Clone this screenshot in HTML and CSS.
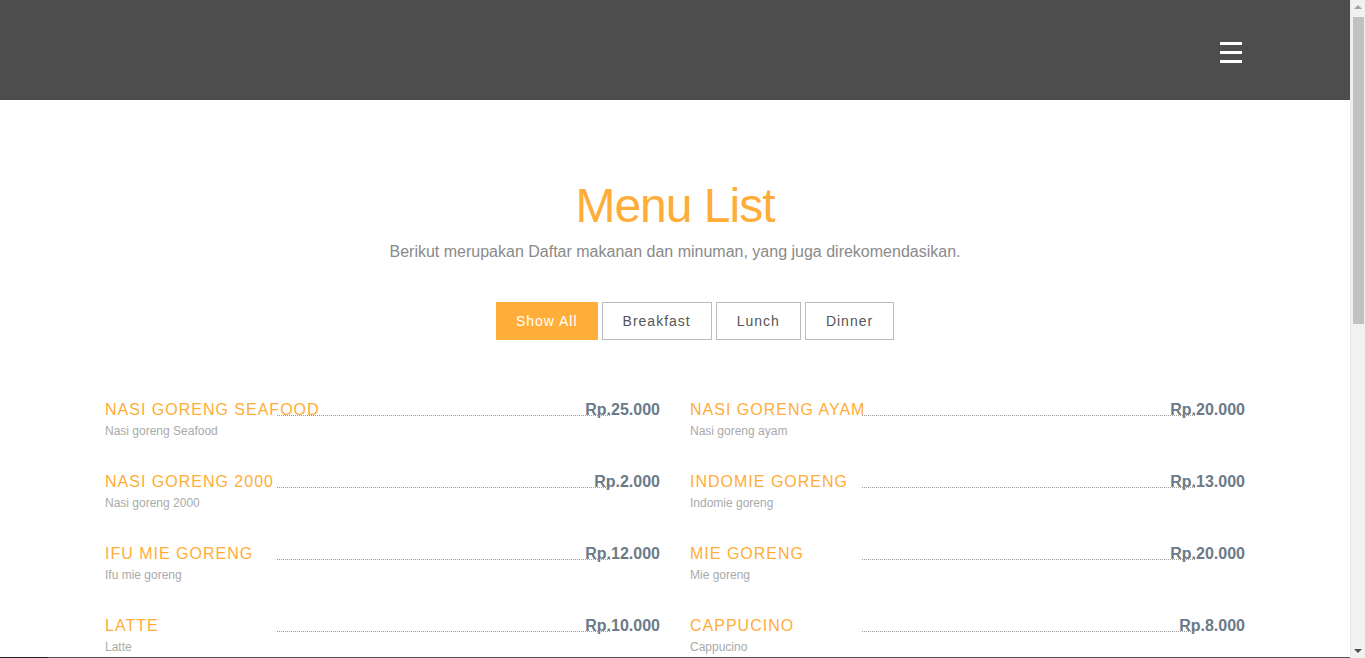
FILE: index.html
```html
<!DOCTYPE html>
<html lang="id">
<head>
<meta charset="utf-8">
<title>Menu List</title>
<link rel="stylesheet" href="styles.css">
</head>
<body>
<header class="topbar">
  <div class="container topbar-inner">
    <button class="hamburger" aria-label="Menu"><span></span><span></span><span></span></button>
  </div>
</header>

<section class="menu-section">
  <div class="container">
    <h1 class="title">Menu List</h1>
    <p class="subtitle">Berikut merupakan Daftar makanan dan minuman, yang juga direkomendasikan.</p>

    <ul class="filters">
      <li><button class="filter active">Show All</button></li>
      <li><button class="filter">Breakfast</button></li>
      <li><button class="filter">Lunch</button></li>
      <li><button class="filter">Dinner</button></li>
    </ul>

    <div class="menu-grid">
      <div class="item"><div class="item-head"><h4 class="item-name">Nasi Goreng Seafood</h4><span class="item-price">Rp.25.000</span></div><span class="dots"></span><p class="item-desc">Nasi goreng Seafood</p></div>
      <div class="item"><div class="item-head"><h4 class="item-name">Nasi Goreng Ayam</h4><span class="item-price">Rp.20.000</span></div><span class="dots"></span><p class="item-desc">Nasi goreng ayam</p></div>
      <div class="item"><div class="item-head"><h4 class="item-name">Nasi Goreng 2000</h4><span class="item-price">Rp.2.000</span></div><span class="dots"></span><p class="item-desc">Nasi goreng 2000</p></div>
      <div class="item"><div class="item-head"><h4 class="item-name">Indomie Goreng</h4><span class="item-price">Rp.13.000</span></div><span class="dots"></span><p class="item-desc">Indomie goreng</p></div>
      <div class="item"><div class="item-head"><h4 class="item-name">Ifu Mie Goreng</h4><span class="item-price">Rp.12.000</span></div><span class="dots"></span><p class="item-desc">Ifu mie goreng</p></div>
      <div class="item"><div class="item-head"><h4 class="item-name">Mie Goreng</h4><span class="item-price">Rp.20.000</span></div><span class="dots"></span><p class="item-desc">Mie goreng</p></div>
      <div class="item"><div class="item-head"><h4 class="item-name">Latte</h4><span class="item-price">Rp.10.000</span></div><span class="dots"></span><p class="item-desc">Latte</p></div>
      <div class="item"><div class="item-head"><h4 class="item-name">Cappucino</h4><span class="item-price">Rp.8.000</span></div><span class="dots"></span><p class="item-desc">Cappucino</p></div>
      <div class="item"><div class="item-head"><h4 class="item-name">Es Teh Manis</h4><span class="item-price">Rp.5.000</span></div><span class="dots"></span><p class="item-desc">Es teh manis</p></div>
      <div class="item"><div class="item-head"><h4 class="item-name">Es Jeruk</h4><span class="item-price">Rp.7.000</span></div><span class="dots"></span><p class="item-desc">Es jeruk</p></div>
    </div>
  </div>
</section>

<footer class="footer">
  <div class="container footer-inner">
    <p class="footer-text">&copy; Menu List</p>
  </div>
</footer>

<div class="bottom-line"><span class="bottom-line-dark"></span></div>

<div class="fake-scrollbar" aria-hidden="true">
  <span class="sb-arrow sb-up"></span>
  <span class="sb-thumb"></span>
  <span class="sb-arrow sb-down"></span>
</div>
</body>
</html>
```

FILE: styles.css
```css
* {
  box-sizing: border-box;
}

body {
  margin: 0 15px 0 0;
  font-family: "Liberation Sans", Arial, sans-serif;
  color: #555;
  background: #fff;
}

.container {
  width: 1140px;
  margin: 0 auto;
}

.topbar {
  height: 100px;
  background: #4d4d4d;
}

.topbar-inner {
  height: 100%;
  display: flex;
  justify-content: flex-end;
  align-items: flex-start;
  padding-top: 42px;
  padding-right: 3px;
}

.hamburger {
  width: 22px;
  padding: 0;
  border: 0;
  background: transparent;
  display: flex;
  flex-direction: column;
  gap: 6px;
  cursor: pointer;
}

.hamburger span {
  display: block;
  height: 3px;
  width: 22px;
  background: #fff;
}

.menu-section {
  padding-top: 79px;
  padding-bottom: 280px;
}

.title {
  margin: 0;
  text-align: center;
  font-size: 48px;
  line-height: 53px;
  font-weight: 400;
  letter-spacing: -1px;
  color: #ffad38;
}

.subtitle {
  margin: 9px 0 0;
  text-align: center;
  font-size: 16px;
  line-height: 22px;
  color: #8a8a8a;
}

.filters {
  list-style: none;
  margin: 39px 0 59px;
  padding: 0 0 0 40px;
  display: flex;
  justify-content: center;
  gap: 4px;
}

.filter {
  font-family: "Liberation Sans", Arial, sans-serif;
  font-size: 14px;
  line-height: 20px;
  letter-spacing: 1px;
  padding: 8px 20px;
  border: 1px solid #bbb;
  background: #fff;
  color: #555;
  cursor: pointer;
}

.filter.active {
  background: #ffae3a;
  border-color: #ffae3a;
  color: #fff;
  padding: 8px 19px;
}

.menu-grid {
  display: grid;
  grid-template-columns: 1fr 1fr;
  column-gap: 30px;
}

.item {
  position: relative;
  margin-bottom: 31px;
}

.item-head {
  display: flex;
  justify-content: space-between;
  align-items: baseline;
}

.item-name {
  margin: 0;
  font-size: 16px;
  line-height: 22px;
  font-weight: 400;
  letter-spacing: 1px;
  text-transform: uppercase;
  color: #ffad38;
}

.item-price {
  font-size: 16px;
  line-height: 22px;
  font-weight: 700;
  color: #6b7a88;
}

.dots {
  position: absolute;
  left: 172px;
  top: 16px;
  width: 333px;
  border-top: 1px dotted #999;
}

.item-desc {
  margin: 2px 0 0;
  font-size: 12px;
  line-height: 17px;
  color: #aaa;
}

.footer {
  background: #4d4d4d;
  padding: 40px 0;
}

.footer-text {
  margin: 0;
  text-align: center;
  color: #ccc;
  font-size: 14px;
}

.bottom-line {
  position: fixed;
  left: 0;
  right: 15px;
  bottom: 0;
  height: 1px;
  background: #555;
}

.bottom-line-dark {
  display: block;
  width: 48px;
  height: 1px;
  background: #222;
}

.fake-scrollbar {
  position: fixed;
  top: 0;
  right: 0;
  bottom: 0;
  width: 15px;
  background: #f1f1f1;
  border-left: 1px solid #e8e8e8;
}

.sb-thumb {
  position: absolute;
  left: 2px;
  right: 1px;
  top: 17px;
  height: 307px;
  background: #c1c1c1;
}

.sb-arrow {
  position: absolute;
  left: 3px;
  width: 0;
  height: 0;
  border-left: 4px solid transparent;
  border-right: 4px solid transparent;
}

.sb-up {
  top: 5px;
  border-bottom: 4px solid #a3a3a3;
}

.sb-down {
  bottom: 5px;
  border-top: 4px solid #505050;
}
```
